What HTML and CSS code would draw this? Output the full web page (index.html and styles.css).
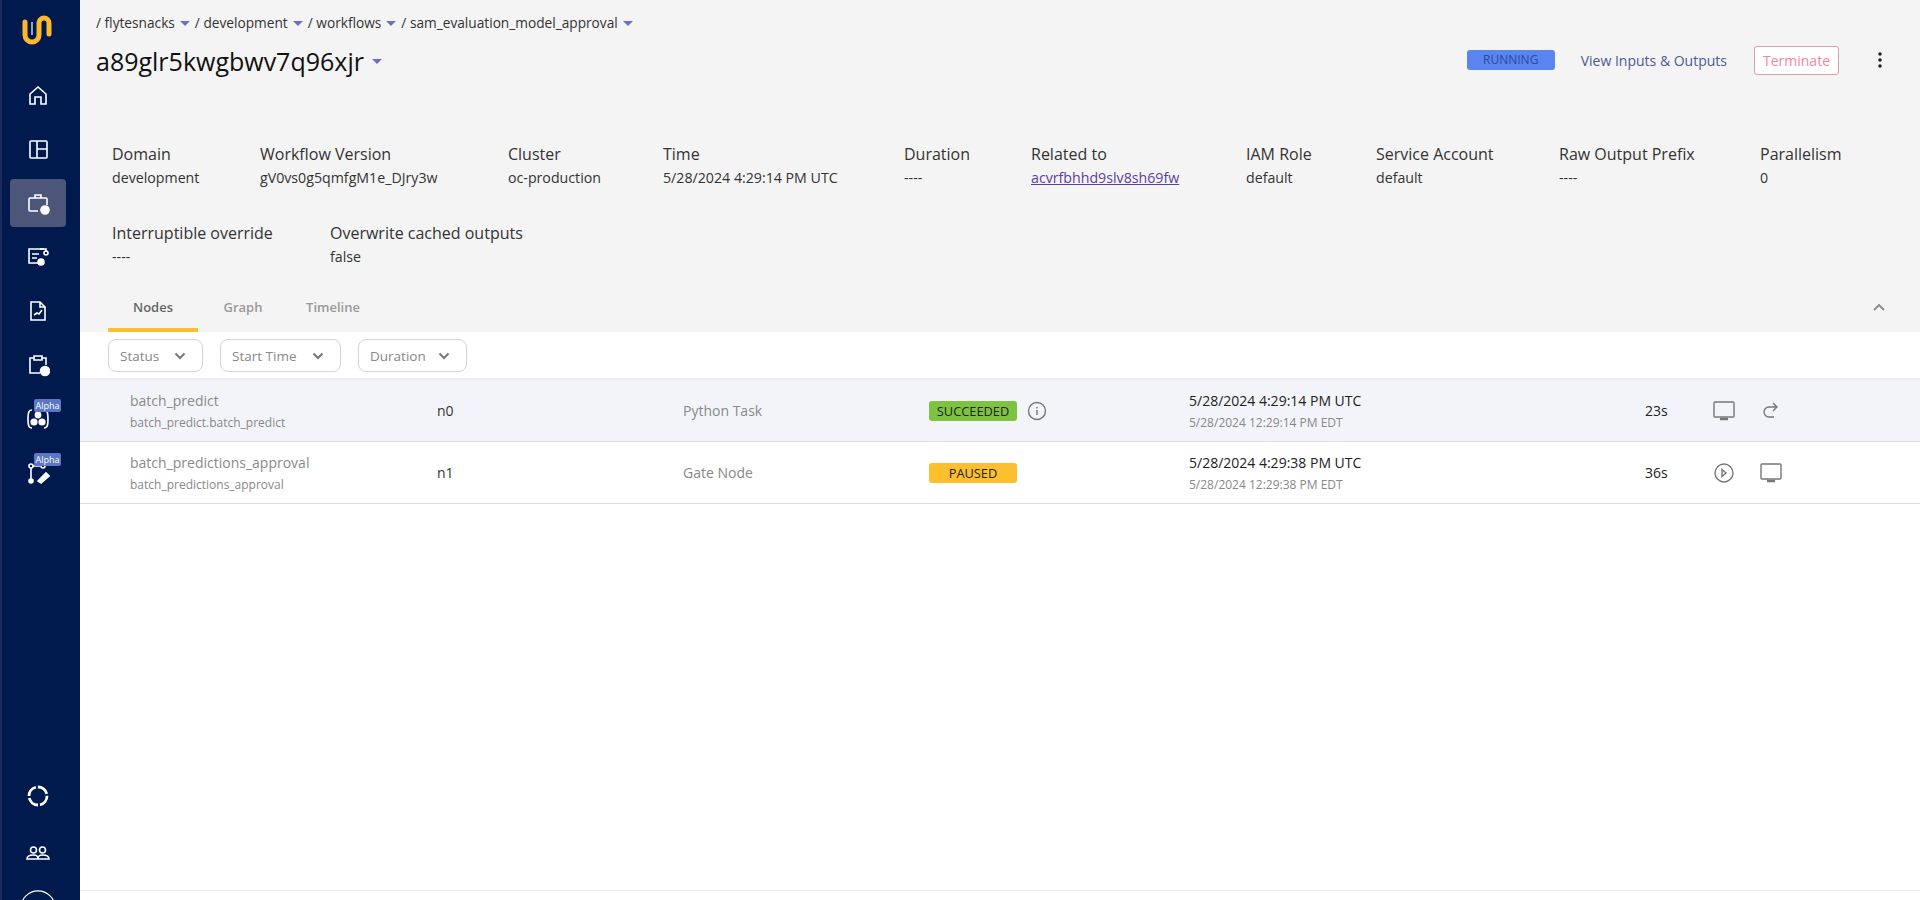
FILE: index.html
```html
<!DOCTYPE html>
<html lang="en">
<head>
<meta charset="utf-8">
<title>a89glr5kwgbwv7q96xjr</title>
<link rel="stylesheet" href="styles.css">
</head>
<body>
<div class="app">
  <nav class="sidebar">
    <div class="logo">
      <svg width="36" height="36" viewBox="0 0 36 36" fill="none"><path d="M5 10v13a7 7 0 0 0 14 0V11a5 5 0 0 1 10 0v11" stroke="#fdb92c" stroke-width="5" stroke-linecap="round"/><path d="M12 10v13" stroke="#fff" stroke-width="1.200"/></svg>
    </div>
    <div class="nav-list">
      <div class="nav-item"><svg class="ico" viewBox="0 0 24 24"><path d="M4 11l8-7 8 7v10h-5v-7H9v7H4z"/></svg></div>
      <div class="nav-item"><svg class="ico" viewBox="0 0 24 24"><rect x="4" y="4" width="17" height="17" rx="1"/><path d="M11 4v17M11 12h10"/></svg></div>
      <div class="nav-item active"><svg class="ico" viewBox="0 0 24 24"><path d="M12 20H4a1 1 0 0 1-1-1V8a1 1 0 0 1 1-1h16a1 1 0 0 1 1 1v6M9 7V4h6v3"/><circle class="solid" cx="19" cy="19" r="4"/></svg></div>
      <div class="nav-item"><svg class="ico" viewBox="0 0 24 24"><path d="M18 4H3v14h11"/><path d="M6 9h7M6 13h5M14 4h6v3"/><circle cx="20" cy="8" r="2"/><circle class="solid" cx="15" cy="17" r="3"/></svg></div>
      <div class="nav-item"><svg class="ico" viewBox="0 0 24 24"><path d="M5 3h9l5 5v13H5zM14 3v5h5M8 16l3-2 2 1 3-4"/></svg></div>
      <div class="nav-item"><svg class="ico" viewBox="0 0 24 24"><path d="M8 5H4v15h10M16 5h4v7M8 3h8v4H8z"/><circle class="solid" cx="19" cy="18" r="4.500"/></svg></div>
      <div class="nav-item"><span class="alpha">Alpha</span><svg class="ico" viewBox="0 0 24 24"><path d="M6 3C3 3 2 5 2 12s1 9 4 9M18 3c3 0 4 2 4 9s-1 9-4 9"/><circle class="solid" cx="12" cy="8" r="2.600"/><circle class="solid" cx="8" cy="15" r="2.800"/><circle class="solid" cx="16" cy="15" r="2.800"/></svg></div>
      <div class="nav-item"><span class="alpha">Alpha</span><svg class="ico" viewBox="0 0 24 24"><circle cx="5" cy="5" r="2"/><circle class="solid" cx="5" cy="20" r="2"/><path d="M5 7v11M7 5h7"/><circle cx="17" cy="5" r="2"/><path class="solid" d="M12 20l8-8 3 3-8 7z"/></svg></div>
    </div>
    <div class="nav-bottom">
      <div class="nav-foot"><svg class="ico" viewBox="0 0 24 24"><circle class="ring" cx="12" cy="12" r="9"/></svg></div>
      <div class="nav-foot"><svg class="ico" viewBox="0 0 24 24"><circle cx="7.500" cy="9" r="3"/><circle cx="16.500" cy="9" r="3"/><path d="M1 18c0-3 3-4 6.500-4s4.500 1 4.500 4zM12 18c0-3 1-4 4.500-4s6.500 1 6.500 4z"/></svg></div>
      <div class="nav-foot clipped"><svg class="avatar" viewBox="0 0 40 40"><circle cx="20" cy="20" r="18"/><path d="M12 15h16"/></svg></div>
    </div>
  </nav>

  <main class="main">
    <section class="head">
      <div class="crumbs">
        <span>/ flytesnacks</span><i class="caret"></i>
        <span>/ development</span><i class="caret"></i>
        <span>/ workflows</span><i class="caret"></i>
        <span>/ sam_evaluation_model_approval</span><i class="caret"></i>
      </div>
      <div class="title-row">
        <h1>a89glr5kwgbwv7q96xjr</h1><i class="caret"></i>
        <div class="actions">
          <span class="running">RUNNING</span>
          <a class="view-io">View Inputs &amp; Outputs</a>
          <button class="terminate">Terminate</button>
          <svg class="more" width="6" height="18" viewBox="0 0 6 18"><circle cx="3" cy="3" r="1.800"/><circle cx="3" cy="9" r="1.800"/><circle cx="3" cy="15" r="1.800"/></svg>
        </div>
      </div>
      <div class="meta meta-a">
        <div><b>Domain</b><span>development</span></div>
        <div><b>Workflow Version</b><span>gV0vs0g5qmfgM1e_DJry3w</span></div>
        <div><b>Cluster</b><span>oc-production</span></div>
        <div><b>Time</b><span>5/28/2024 4:29:14 PM UTC</span></div>
        <div><b>Duration</b><span>----</span></div>
        <div><b>Related to</b><a>acvrfbhhd9slv8sh69fw</a></div>
        <div><b>IAM Role</b><span>default</span></div>
        <div><b>Service Account</b><span>default</span></div>
        <div><b>Raw Output Prefix</b><span>----</span></div>
        <div><b>Parallelism</b><span>0</span></div>
      </div>
      <div class="meta meta-b">
        <div><b>Interruptible override</b><span>----</span></div>
        <div><b>Overwrite cached outputs</b><span>false</span></div>
      </div>
      <div class="tabs">
        <span class="tab on">Nodes</span>
        <span class="tab">Graph</span>
        <span class="tab">Timeline</span>
        <svg class="collapse" width="14" height="9" viewBox="0 0 14 9"><path d="M2 7l5-5 5 5"/></svg>
      </div>
    </section>

    <section class="filters">
      <button class="filter">Status<svg width="12" height="8" viewBox="0 0 12 8"><path d="M1.500 1.500L6 6l4.500-4.500"/></svg></button>
      <button class="filter">Start Time<svg width="12" height="8" viewBox="0 0 12 8"><path d="M1.500 1.500L6 6l4.500-4.500"/></svg></button>
      <button class="filter">Duration<svg width="12" height="8" viewBox="0 0 12 8"><path d="M1.500 1.500L6 6l4.500-4.500"/></svg></button>
    </section>

    <section class="table">
      <div class="row hover">
        <div class="c-name"><div class="name">batch_predict</div><div class="sub">batch_predict.batch_predict</div></div>
        <div class="c-id">n0</div>
        <div class="c-type">Python Task</div>
        <div class="c-status"><span class="badge ok">SUCCEEDED</span>
          <svg class="act info" width="20" height="20" viewBox="0 0 20 20"><circle cx="10" cy="10" r="8.500"/><path d="M10 9v5M10 6v1.400"/></svg></div>
        <div class="c-time"><div class="utc">5/28/2024 4:29:14 PM UTC</div><div class="sub">5/28/2024 12:29:14 PM EDT</div></div>
        <div class="c-dur">23s</div>
        <div class="c-act">
          <svg class="act" width="22" height="20" viewBox="0 0 22 20"><rect x="1" y="1" width="20" height="15" rx="1"/><path class="thick" d="M7 18h8"/></svg>
          <svg class="act" width="22" height="20" viewBox="0 0 22 20"><path d="M17 6H9a5 5 0 0 0 0 10h5M13 2l4 4-4 4"/></svg>
        </div>
      </div>
      <div class="row">
        <div class="c-name"><div class="name">batch_predictions_approval</div><div class="sub">batch_predictions_approval</div></div>
        <div class="c-id">n1</div>
        <div class="c-type">Gate Node</div>
        <div class="c-status"><span class="badge wait">PAUSED</span></div>
        <div class="c-time"><div class="utc">5/28/2024 4:29:38 PM UTC</div><div class="sub">5/28/2024 12:29:38 PM EDT</div></div>
        <div class="c-dur">36s</div>
        <div class="c-act">
          <svg class="act" width="22" height="20" viewBox="0 0 22 20"><circle cx="11" cy="10" r="9"/><path d="M9 6.500l4 3.500-4 3.500z"/></svg>
          <svg class="act" width="22" height="20" viewBox="0 0 22 20"><rect x="1" y="1" width="20" height="15" rx="1"/><path class="thick" d="M7 18h8"/></svg>
        </div>
      </div>
    </section>
    <div class="foot"></div>
  </main>
</div>
</body>
</html>
```

FILE: styles.css
```css
* { box-sizing: border-box; }
html, body { margin: 0; height: 900px; overflow: hidden; background: #fff; }
body { font-family: "Open Sans", "Noto Sans", sans-serif; color: #111; font-size: 13.500px; }
.app { display: flex; height: 900px; }

.sidebar { width: 80px; flex: none; height: 900px; background: #001a4d; border-left: 2px solid #1d2c5c; display: flex; flex-direction: column; align-items: center; padding-right: 6px; overflow: hidden; }
.logo { height: 71px; display: flex; align-items: flex-start; padding-top: 12px; }
.nav-list { display: flex; flex-direction: column; gap: 6px; }
.nav-item { position: relative; width: 56px; height: 48px; border-radius: 4px; display: flex; align-items: center; justify-content: center; }
.nav-item.active { background: #4c5679; }
.ico { width: 24px; height: 24px; fill: none; stroke: #fff; stroke-width: 1.600; }
.ico .solid { fill: #fff; }
.ico .ring { stroke-width: 2.800; stroke-dasharray: 12 2; }
.alpha { position: absolute; left: 24px; top: 4px; width: 27px; height: 13px; border-radius: 2px; background: #5a76c4; color: #fff; font-size: 9px; line-height: 13px; text-align: center; z-index: 1; }
.nav-bottom { margin-top: auto; display: flex; flex-direction: column; align-items: center; gap: 33px; margin-bottom: -26px; }
.nav-foot { height: 24px; display: flex; align-items: center; }
.nav-foot.clipped { height: 36px; margin-top: -8px; }
.avatar { width: 38px; height: 38px; fill: none; stroke: #fff; stroke-width: 1.200; }

.main { flex: 1; min-width: 0; display: flex; flex-direction: column; }
.head { background: #f4f4f4; padding: 14px 0 0 16px; height: 332px; display: flex; flex-direction: column; }
.crumbs { display: flex; align-items: center; height: 16px; font-size: 13.700px; color: #333; }
.crumbs .caret { margin: 2px 5px 0 5px; }
.caret { display: inline-block; width: 0; height: 0; border-left: 5px solid transparent; border-right: 5px solid transparent; border-top: 5px solid #6d6dcf; }
.title-row { display: flex; align-items: center; height: 36px; margin-top: 13px; padding-right: 37px; }
h1 { margin: 0 8px 0 0; font-size: 25px; font-weight: 400; color: #111; }
.actions { margin-left: auto; margin-top: -2px; display: flex; align-items: center; }
.running { width: 88px; height: 20px; line-height: 20px; text-align: center; border-radius: 3px; background: #5a85f0; color: #2c4a9a; font-size: 12px; }
.view-io { margin-left: 26px; color: #4e5a92; font-size: 14px; }
.terminate { margin-left: 27px; width: 85px; height: 29px; border: 1px solid #d8a0aa; border-radius: 3px; background: #fff; color: #ec8a9c; font: inherit; font-size: 14px; padding: 0; }
.more { margin-left: 38px; fill: #222; }

.meta { display: grid; padding-left: 16px; }
.meta div { display: flex; flex-direction: column; white-space: nowrap; }
.meta b { font-weight: 400; font-size: 16px; line-height: 20px; color: #333; }
.meta span, .meta a { font-size: 14.200px; line-height: 18px; margin-top: 5px; color: #333; }
.meta a { color: #5b3ea0; text-decoration: underline; }
.meta-a { margin-top: 65px; grid-template-columns: 148px 248px 155px 241px 127px 215px 130px 183px 201px auto; }
.meta-b { margin-top: 36px; grid-template-columns: 218px auto; }

.tabs { margin-top: auto; display: flex; height: 42px; position: relative; font-size: 13px; font-weight: 600; color: #999; padding-left: 12px; }
.tab { width: 90px; height: 42px; padding-top: 8px; text-align: center; border-bottom: 4px solid transparent; }
.tab.on { color: #666; border-bottom-color: #fdc02d; }
.collapse { position: absolute; right: 34px; top: 13px; fill: none; stroke: #888; stroke-width: 1.800; }

.filters { height: 48px; background: #fff; padding: 7px 0 0 28px; display: flex; gap: 17px; align-items: flex-start; border-bottom: 2px solid #eeeeee; }
.filter { height: 33px; border: 1px solid #d5d5d5; border-radius: 8px; background: #fff; color: #888; font: inherit; padding: 0 16px 0 11px; display: flex; align-items: center; justify-content: space-between; gap: 12px; }
.filter:nth-child(1) { width: 95px; }
.filter:nth-child(2) { width: 121px; }
.filter:nth-child(3) { width: 109px; }
.filter svg { fill: none; stroke: #777; stroke-width: 2; }

.row { height: 62px; display: grid; grid-template-columns: 307px 246px 246px 260px 456px 68px auto; align-items: center; padding-left: 50px; border-bottom: 1px solid #dcdcdc; }
.row.hover { background: #f3f4fa; }
.name { font-size: 14px; line-height: 20px; color: #8a8a8a; }
.sub { font-size: 12px; line-height: 16px; margin-top: 4px; color: #888; }
.c-id { font-size: 14px; color: #333; }
.c-type { font-size: 14px; color: #888; }
.c-status { display: flex; align-items: center; gap: 10px; }
.badge { width: 88px; height: 20px; line-height: 20px; border-radius: 3px; text-align: center; font-size: 12.800px; color: #222; }
.badge.ok { background: #7fc241; }
.badge.wait { background: #fdbf2d; }
.utc { font-size: 14px; line-height: 20px; color: #222; }
.c-dur { font-size: 14px; color: #222; }
.c-act { display: flex; gap: 25px; }
.act { fill: none; stroke: #777; stroke-width: 1.400; }
.act .thick { stroke-width: 2.500; }
.foot { margin-top: auto; height: 10px; border-top: 1px solid #eeeeee; }
```
